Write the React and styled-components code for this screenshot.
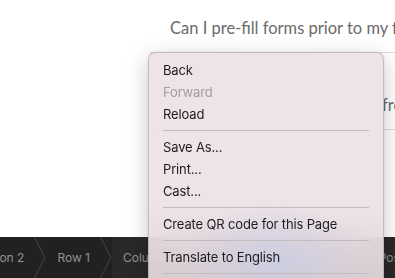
import React from "react";
import styled, { createGlobalStyle } from "styled-components";

const GlobalStyle = createGlobalStyle`
  html, body {
    margin: 0;
    padding: 0;
    background: #ffffff;
    overflow: hidden;
  }
  #root {
    width: 395px;
    height: 278px;
    overflow: hidden;
  }
`;

const Page = styled.div`
  position: relative;
  width: 395px;
  height: 278px;
  display: flex;
  flex-direction: column;
  overflow: hidden;
`;

const Question = styled.h2`
  margin: 0;
  padding: 17px 0 0 170px;
  height: 52px;
  box-sizing: border-box;
  font-family: "Lato", sans-serif;
  font-weight: 400;
  font-size: 16.5px;
  line-height: 22px;
  color: #6b6b6b;
  white-space: nowrap;
`;

const Answer = styled.div`
  margin-left: 150px;
  height: 78px;
  box-sizing: border-box;
  border-top: 1px solid #dcdcdc;
  border-bottom: 1px solid #dcdcdc;
  padding: 41px 0 0 232px;
  font-family: "Lato", sans-serif;
  font-size: 16.5px;
  line-height: 22px;
  color: #6b6b6b;
  white-space: nowrap;
`;

const Spacer = styled.div`
  flex: 1;
`;

const Breadcrumbs = styled.nav`
  height: 41px;
  flex-shrink: 0;
  background: #212121;
  display: flex;
  align-items: stretch;
  margin-left: -40px;
  white-space: nowrap;
`;

const Crumb = styled.div`
  display: flex;
  align-items: center;
  padding: 0 10px 0 11px;
  background: ${(p) => (p.$active ? "#292929" : "#212121")};
  font-family: "Inter", sans-serif;
  font-size: 12px;
  color: #929292;
`;

const Chevron = () => (
  <svg width="12" height="41" viewBox="0 0 12 41" style={{ flexShrink: 0 }}>
    <polyline
      points="0.5,0 11,20.5 0.5,41"
      fill="none"
      stroke="#454545"
      strokeWidth="1"
    />
  </svg>
);

const Menu = styled.ul`
  position: absolute;
  left: 148px;
  top: 52px;
  width: 236px;
  height: 240px;
  margin: 0;
  padding: 6px 0;
  box-sizing: border-box;
  list-style: none;
  border-radius: 7px;
  border: 1px solid rgba(150, 140, 145, 0.45);
  background:
    radial-gradient(ellipse 90px 60px at 125px 210px, rgba(200, 205, 230, 0.75), rgba(200, 205, 230, 0) 100%),
    rgba(236, 224, 228, 0.9);
  backdrop-filter: blur(20px);
  box-shadow: 0 6px 22px rgba(0, 0, 0, 0.22), 0 0 2px rgba(0, 0, 0, 0.12);
  font-family: "Inter", sans-serif;
  font-size: 13px;
  letter-spacing: -0.15px;
`;

const Item = styled.li`
  height: 22px;
  line-height: 22px;
  padding: 0 14px;
  color: ${(p) => (p.$disabled ? "#a39c9f" : "#1e1c1d")};
`;

const Separator = styled.li`
  height: 1px;
  margin: 5px 14px 5px 14px;
  background: #c4babd;
`;

export default function App() {
  return (
    <>
      <GlobalStyle />
      <Page>
        <Question>Can I pre-fill forms prior to my first appointment?</Question>
        <Answer>from the patient portal</Answer>
        <Spacer />
        <Breadcrumbs>
          <Crumb>Section 2</Crumb>
          <Chevron />
          <Crumb>Row 1</Crumb>
          <Chevron />
          <Crumb $active>Column 1</Crumb>
          <Chevron />
          <Crumb $active>Accordion</Crumb>
          <Chevron />
          <Crumb $active>Toggle 1</Crumb>
          <Chevron />
          <Crumb $active>Post Title</Crumb>
        </Breadcrumbs>
        <Menu>
          <Item>Back</Item>
          <Item $disabled>Forward</Item>
          <Item>Reload</Item>
          <Separator />
          <Item>Save As...</Item>
          <Item>Print...</Item>
          <Item>Cast...</Item>
          <Separator />
          <Item>Create QR code for this Page</Item>
          <Separator />
          <Item>Translate to English</Item>
          <Separator />
          <Item>Inspect</Item>
        </Menu>
      </Page>
    </>
  );
}
